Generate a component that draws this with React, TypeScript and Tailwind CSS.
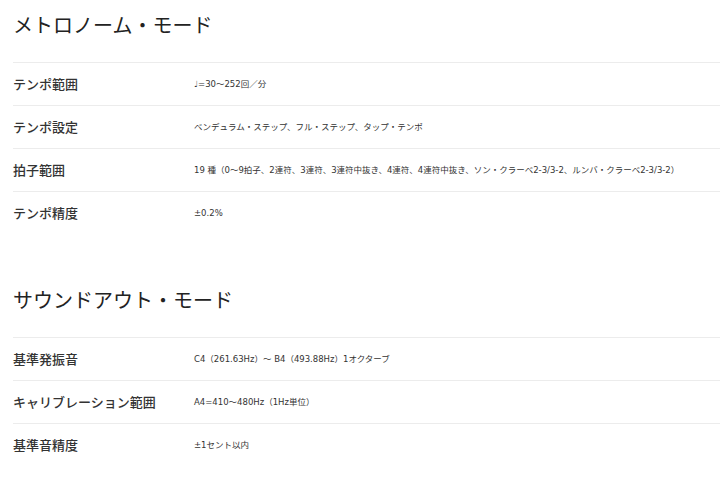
import React from "react";

const sections = [
  {
    title: "メトロノーム・モード",
    rows: [
      ["テンポ範囲", "♩=30〜252回／分"],
      ["テンポ設定", "ベンデュラム・ステップ、フル・ステップ、タップ・テンポ"],
      ["拍子範囲", "19 種（0〜9拍子、2連符、3連符、3連符中抜き、4連符、4連符中抜き、ソン・クラーベ2-3/3-2、ルンバ・クラーベ2-3/3-2）"],
      ["テンポ精度", "±0.2%"],
    ],
  },
  {
    title: "サウンドアウト・モード",
    rows: [
      ["基準発振音", "C4（261.63Hz）～ B4（493.88Hz）1オクターブ"],
      ["キャリブレーション範囲", "A4=410〜480Hz（1Hz単位）"],
      ["基準音精度", "±1セント以内"],
    ],
  },
];

export default function App() {
  return (
    <div className="w-[720px] h-[478px] bg-white overflow-hidden pl-[13px] pt-[11px] font-['Noto_Sans_CJK_JP','Noto_Sans',sans-serif]">
      {sections.map((s, i) => (
        <section key={i} className={i > 0 ? "mt-[52px]" : ""}>
          <h2 className="text-[20px] leading-[28px] font-normal text-[#222] mb-[23px]">{s.title}</h2>
          <div>
            {s.rows.map(([k, v], j) => (
              <div key={j} className="flex items-center h-[43px] border-t border-[#ececec]">
                <div className="w-[181px] shrink-0 text-[13px] font-medium text-[#333]">{k}</div>
                <div className="text-[8.5px] text-[#333] whitespace-nowrap font-['DejaVu_Sans','Noto_Sans_CJK_JP',sans-serif]">
                  {v}
                </div>
              </div>
            ))}
          </div>
        </section>
      ))}
    </div>
  );
}
